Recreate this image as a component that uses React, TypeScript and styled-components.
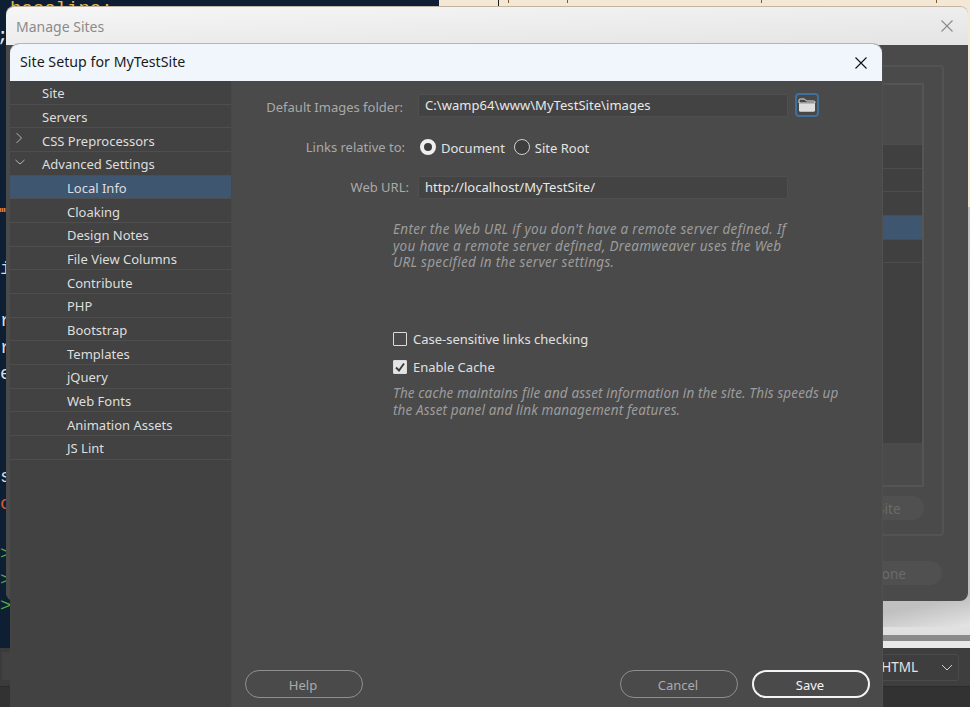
import React from "react";
import styled, { createGlobalStyle } from "styled-components";

const FONT = `"Noto Sans", "Open Sans", sans-serif`;

const Global = createGlobalStyle`
  html, body { margin: 0; padding: 0; background: #0e1f33; }
  * { box-sizing: border-box; }
`;

const Screen = styled.div`
  position: relative;
  width: 970px;
  height: 707px;
  overflow: hidden;
  font-family: ${FONT};
  font-size: 13px;
`;

/* background application */
const Backdrop = styled.div`
  display: grid;
  grid-template-columns: 439px 1fr;
  grid-template-rows: 648px 38px 21px;
  height: 100%;
`;
const CodePane = styled.div`
  background: #0e1f33;
  overflow: hidden;
  font-family: "Liberation Mono", monospace;
  font-size: 19px;
`;
const CodeLine = styled.div<{ $color?: string; $indent?: number; $mt?: number }>`
  height: 26.2px;
  line-height: 18px;
  white-space: nowrap;
  color: ${(p) => p.$color || "#d5dde5"};
  text-indent: ${(p) => p.$indent || 0}px;
  margin-top: ${(p) => p.$mt || 0}px;
`;
const CodeMark = styled.div`
  width: 6px;
  height: 4px;
  background: repeating-linear-gradient(90deg, #d2763a 0 1px, #8a4a2a 1px 2px);
`;
const PreviewPane = styled.div`
  display: flex;
  flex-direction: column;
`;
const Cream = styled.div`
  height: 207px;
  background: #f4e7d3;
  display: flex;
  align-items: flex-start;
  padding-left: 59px;
`;
const Tick = styled.span<{ $gap: number; $dark?: boolean }>`
  width: 1px;
  height: ${(p) => (p.$dark ? 7 : 3)}px;
  margin-left: ${(p) => p.$gap}px;
  background: ${(p) => (p.$dark ? "#1a1a1a" : "#7a5a30")};
`;
const GreyArea = styled.div`
  flex: 1;
  background: linear-gradient(168deg, #c6c6c6 0%, #c0c0c0 94%, #e4e4e4 100%);
`;
const Stripe = styled.div<{ $h: number; $c: string }>`
  height: ${(p) => p.$h}px;
  background: ${(p) => p.$c};
`;
const StatusLeft = styled.div`
  background: #3b3b3b;
  padding: 4px 0 6px 2px;
`;
const StatusStub = styled.div`
  height: 100%;
  background: #424242;
`;
const StatusRight = styled.div`
  background: #3e3e3e;
  display: flex;
  justify-content: flex-end;
  align-items: center;
  padding-right: 11px;
`;
const SelectBox = styled.div`
  width: 200px;
  height: 27px;
  border: 1px solid #4a4a4a;
  border-radius: 3px;
  display: flex;
  align-items: center;
  justify-content: flex-end;
  gap: 23px;
  padding-right: 5px;
  color: #e4e4e4;
  font-size: 13.5px;
`;
const FooterBar = styled.div`
  background: #323232;
  border-top: 1px solid #2a2a2a;
`;

/* windows */
const ManageWindow = styled.div`
  position: absolute;
  left: 6px;
  top: 7px;
  width: 962px;
  height: 594px;
  border-radius: 8px;
  overflow: hidden;
  display: flex;
  flex-direction: column;
  box-shadow: 0 -1px 0 #c0b5a5;
`;
const ManageTitle = styled.div`
  height: 38px;
  flex: none;
  background: linear-gradient(178deg, #f6f6f6, #e4e4e4);
  color: #8b8b8b;
  font-size: 14px;
  display: flex;
  align-items: center;
  justify-content: space-between;
  padding: 0 15px 0 10px;
`;
const ManageBody = styled.div`
  flex: 1;
  background: #4a4a4a;
  padding: 20px 24px 15px 40px;
  display: flex;
  flex-direction: column;
`;
const OuterFrame = styled.div`
  height: 471px;
  border: 2px solid #535353;
  border-radius: 4px;
  padding: 16px 18px 0 18px;
  display: flex;
  flex-direction: column;
`;
const InnerFrame = styled.div`
  height: 404px;
  flex: none;
  border: 2px solid #555;
  display: flex;
  flex-direction: column;
`;
const ListHead = styled.div`
  height: 59px;
  flex: none;
`;
const SiteList = styled.div`
  height: 299px;
  flex: none;
  background: #404040;
`;
const SiteRow = styled.div<{ $active?: boolean }>`
  height: 23.7px;
  background: ${(p) => (p.$active ? "#3f5670" : "#404040")};
  border-top: 1px solid #4c4c4c;
`;
const FrameActions = styled.div`
  display: flex;
  justify-content: flex-end;
  margin-top: 9px;
`;
const GhostButton = styled.div<{ $w: number }>`
  width: ${(p) => p.$w}px;
  height: 24px;
  border-radius: 12px;
  background: #505050;
  color: #6b6b6b;
  font-size: 13.5px;
  display: flex;
  align-items: center;
  justify-content: center;
  padding-top: 1px;
`;
const BodyActions = styled.div`
  display: flex;
  justify-content: flex-end;
  margin: 25px 2px 0 0;
`;

const Dialog = styled.div`
  position: absolute;
  left: 10px;
  top: 44px;
  width: 872px;
  height: 663px;
  border-radius: 9px 9px 0 0;
  overflow: hidden;
  display: flex;
  flex-direction: column;
  background: #4a4a4a;
  box-shadow: 0 -1px 0 #b5b5b5, 1px 0 0 #505050;
`;
const DialogTitle = styled.div`
  height: 37px;
  flex: none;
  background: #f0f6fb;
  color: #1a1a1a;
  font-size: 14.2px;
  letter-spacing: 0.02px;
  display: flex;
  align-items: center;
  justify-content: space-between;
  padding: 0 15px 0 10px;
`;
const TitleText = styled.span`
  position: relative;
  top: -1px;
`;
const DialogBody = styled.div`
  flex: 1;
  display: flex;
  min-height: 0;
`;
const Sidebar = styled.nav`
  width: 222px;
  flex: none;
  background: #424242;
  border-right: 1px solid #484848;
`;
const TreeRow = styled.div<{ $active?: boolean; $child?: boolean }>`
  height: 23.68px;
  display: flex;
  align-items: center;
  position: relative;
  padding-left: ${(p) => (p.$child ? 57 : 32)}px;
  padding-top: 2px;
  background: ${(p) => (p.$active ? "#3f5670" : "#424242")};
  border-bottom: 1px solid #4e4e4e;
  color: #dedede;
  font-size: 13px;
`;
const Twisty = styled.svg`
  position: absolute;
  left: 2px;
  top: 3px;
  width: 14px;
  height: 14px;
  fill: none;
  stroke: #b5b5b5;
  stroke-width: 1;
`;
const Main = styled.main`
  flex: 1;
  display: flex;
  flex-direction: column;
  padding: 12px 12px 9px 12px;
  min-width: 0;
`;
const FieldRow = styled.div<{ $mt: number; $h?: number }>`
  display: flex;
  align-items: center;
  margin-top: ${(p) => p.$mt}px;
  height: ${(p) => p.$h || 24}px;
`;
const FieldLabel = styled.label<{ $inset: number; $shift?: number }>`
  width: 174px;
  flex: none;
  text-align: right;
  white-space: nowrap;
  padding-right: ${(p) => p.$inset}px;
  color: #a9a9a9;
  font-size: 13px;
  position: relative;
  top: ${(p) => p.$shift || 0}px;
`;
const TextField = styled.div`
  width: 370px;
  height: 23px;
  background: #434343;
  border: 1px solid #4f4f4f;
  border-radius: 2px;
  color: #e8e8e8;
  font-size: 13px;
  letter-spacing: 0.05px;
  display: flex;
  align-items: center;
  padding-left: 6px;
`;
const FolderButton = styled.button`
  width: 24px;
  height: 24px;
  margin-left: 7px;
  padding: 0;
  background: #484848;
  border: 2px solid #3f6f9f;
  border-radius: 4px;
  display: flex;
  align-items: center;
  justify-content: center;
`;
const RadioGroup = styled.div`
  display: flex;
  align-items: center;
  margin-left: 2px;
  color: #e4e4e4;
  font-size: 13px;
  padding-top: 1px;
`;
const Radio = styled.span<{ $on?: boolean }>`
  width: 16px;
  height: 16px;
  border-radius: 50%;
  flex: none;
  background: #3d3d3d;
  border: ${(p) => (p.$on ? "4px solid #efefef" : "1px solid #d0d0d0")};
  margin-right: 5px;
  position: relative;
  top: -1px;
`;
const RadioText = styled.span`
  margin-right: 9px;
`;
const Hint = styled.p<{ $mt: number; $spacing: number; $leading: number }>`
  margin: ${(p) => p.$mt}px 0 0 149px;
  width: 480px;
  color: #9c9c9c;
  font-style: italic;
  font-size: 13.5px;
  letter-spacing: ${(p) => p.$spacing}px;
  line-height: ${(p) => p.$leading}px;
  white-space: nowrap;
`;
const CheckRow = styled.div<{ $mt: number }>`
  display: flex;
  align-items: center;
  height: 16px;
  margin: ${(p) => p.$mt}px 0 0 149px;
  color: #e0e0e0;
  font-size: 13px;
`;
const CheckBox = styled.span<{ $on?: boolean }>`
  width: 14px;
  height: 14px;
  flex: none;
  margin-right: 6px;
  border-radius: 1px;
  border: 1px solid #dcdcdc;
  background: ${(p) => (p.$on ? "#e4e4e4" : "transparent")};
  display: flex;
  align-items: center;
  justify-content: center;
`;
const Footer = styled.footer`
  margin-top: auto;
  display: flex;
  align-items: center;
  gap: 14px;
`;
const PillButton = styled.button<{ $primary?: boolean }>`
  width: 118px;
  height: 28px;
  border-radius: 14px;
  background: transparent;
  font-family: ${FONT};
  font-size: 13px;
  padding: 1px 2px 0 0;
  color: ${(p) => (p.$primary ? "#f4f4f4" : "#ababab")};
  border: ${(p) => (p.$primary ? "2px solid #f4f4f4" : "1px solid #8f8f8f")};
`;
const HelpButton = styled(PillButton)`
  margin-left: 1px;
`;
const Spacer = styled.div`
  flex: 1;
`;

const CloseIcon = ({ color, size }: { color: string; size: number }) => (
  <svg width={size} height={size} viewBox="0 0 12 12" fill="none" stroke={color} strokeWidth="1.1">
    <path d="M0.5 0.5L11.5 11.5M11.5 0.5L0.5 11.5" />
  </svg>
);

const tree: { label: string; child?: boolean; active?: boolean; twist?: "right" | "down" }[] = [
  { label: "Site" },
  { label: "Servers" },
  { label: "CSS Preprocessors", twist: "right" },
  { label: "Advanced Settings", twist: "down" },
  { label: "Local Info", child: true, active: true },
  { label: "Cloaking", child: true },
  { label: "Design Notes", child: true },
  { label: "File View Columns", child: true },
  { label: "Contribute", child: true },
  { label: "PHP", child: true },
  { label: "Bootstrap", child: true },
  { label: "Templates", child: true },
  { label: "jQuery", child: true },
  { label: "Web Fonts", child: true },
  { label: "Animation Assets", child: true },
  { label: "JS Lint", child: true },
];

export default function App() {
  return (
    <Screen>
      <Global />
      <Backdrop>
        <CodePane>
          <CodeLine $color="#e8b840" $indent={10}>baseline;</CodeLine>
          <CodeLine $color="#e8e8e8" $indent={-3} $mt={1}>;</CodeLine>
          <CodeLine $mt={155}><CodeMark /></CodeLine>
          <CodeLine $mt={25}>i</CodeLine>
          <CodeLine $mt={26}>r</CodeLine>
          <CodeLine $mt={1}>r</CodeLine>
          <CodeLine>e</CodeLine>
          <CodeLine $mt={77}>s</CodeLine>
          <CodeLine $color="#d25a3c">c</CodeLine>
          <CodeLine $color="#4fae3c" $mt={24}>&gt;</CodeLine>
          <CodeLine $color="#4fae3c">&gt;</CodeLine>
          <CodeLine $color="#4fae3c">&gt;</CodeLine>
        </CodePane>
        <PreviewPane>
          <Cream>
            <Tick $gap={0} $dark />
            <Tick $gap={9} />
            <Tick $gap={58} />
            <Tick $gap={193} />
            <Tick $gap={174} />
          </Cream>
          <GreyArea />
          <Stripe $h={8} $c="#e0e0e0" />
          <Stripe $h={6} $c="#8a8a8a" />
          <Stripe $h={7} $c="#e8e8e8" />
        </PreviewPane>
        <StatusLeft><StatusStub /></StatusLeft>
        <StatusRight>
          <SelectBox>
            HTML
            <svg width="12" height="7" viewBox="0 0 12 7" fill="none" stroke="#d0d0d0" strokeWidth="1">
              <path d="M1 1L6 6L11 1" />
            </svg>
          </SelectBox>
        </StatusRight>
        <FooterBar />
        <FooterBar />
      </Backdrop>

      <ManageWindow>
        <ManageTitle>
          Manage Sites
          <CloseIcon color="#8a8a8a" size={12} />
        </ManageTitle>
        <ManageBody>
          <OuterFrame>
            <InnerFrame>
              <ListHead />
              <SiteList>
                <SiteRow />
                <SiteRow />
                <SiteRow />
                <SiteRow $active />
                <SiteRow />
                <SiteRow />
              </SiteList>
            </InnerFrame>
            <FrameActions>
              <GhostButton $w={118}>Import Site</GhostButton>
            </FrameActions>
          </OuterFrame>
          <BodyActions>
            <GhostButton $w={106}>Done</GhostButton>
          </BodyActions>
        </ManageBody>
      </ManageWindow>

      <Dialog>
        <DialogTitle>
          <TitleText>Site Setup for MyTestSite</TitleText>
          <CloseIcon color="#111" size={12} />
        </DialogTitle>
        <DialogBody>
          <Sidebar>
            {tree.map((t) => (
              <TreeRow key={t.label} $child={t.child} $active={t.active}>
                {t.twist === "right" && (
                  <Twisty viewBox="0 0 14 14"><path d="M4.5 2L9.5 7L4.5 12" /></Twisty>
                )}
                {t.twist === "down" && (
                  <Twisty viewBox="0 0 14 14"><path d="M3.5 5L8 9L12.5 5" /></Twisty>
                )}
                {t.label}
              </TreeRow>
            ))}
          </Sidebar>
          <Main>
            <FieldRow $mt={0}>
              <FieldLabel $inset={15} $shift={2}>Default Images folder:</FieldLabel>
              <TextField>C:\wamp64\www\MyTestSite\images</TextField>
              <FolderButton aria-label="Browse">
                <svg width="18" height="16" viewBox="0 0 18 16">
                  <path d="M1 3.2C1 2.5 1.5 2 2.2 2H6.5L8.5 4H15.8C16.5 4 17 4.5 17 5.2V6H1Z" fill="none" stroke="#e6e6e6" strokeWidth="1" />
                  <path d="M1 6.5H17V13.5C17 14.2 16.5 14.7 15.8 14.7H2.2C1.5 14.7 1 14.2 1 13.5Z" fill="#dedede" />
                </svg>
              </FolderButton>
            </FieldRow>
            <FieldRow $mt={18}>
              <FieldLabel $inset={13}>Links relative to:</FieldLabel>
              <RadioGroup>
                <Radio $on />
                <RadioText>Document</RadioText>
                <Radio />
                <RadioText>Site Root</RadioText>
              </RadioGroup>
            </FieldRow>
            <FieldRow $mt={16}>
              <FieldLabel $inset={9}>Web URL:</FieldLabel>
              <TextField>http://localhost/MyTestSite/</TextField>
            </FieldRow>
            <Hint $mt={22} $spacing={0.31} $leading={16.5}>
              Enter the Web URL if you don't have a remote server defined. If<br />
              you have a remote server defined, Dreamweaver uses the Web<br />
              URL specified in the server settings.
            </Hint>
            <CheckRow $mt={60}>
              <CheckBox />
              Case-sensitive links checking
            </CheckRow>
            <CheckRow $mt={12}>
              <CheckBox $on>
                <svg width="12" height="12" viewBox="0 0 12 12" fill="none" stroke="#3a3a3a" strokeWidth="1.8">
                  <path d="M2 6.5L5 9.5L10 2.5" />
                </svg>
              </CheckBox>
              Enable Cache
            </CheckRow>
            <Hint $mt={10} $spacing={0.13} $leading={17}>
              The cache maintains file and asset information in the site. This speeds up<br />
              the Asset panel and link management features.
            </Hint>
            <Footer>
              <HelpButton>Help</HelpButton>
              <Spacer />
              <PillButton>Cancel</PillButton>
              <PillButton $primary>Save</PillButton>
            </Footer>
          </Main>
        </DialogBody>
      </Dialog>
    </Screen>
  );
}
